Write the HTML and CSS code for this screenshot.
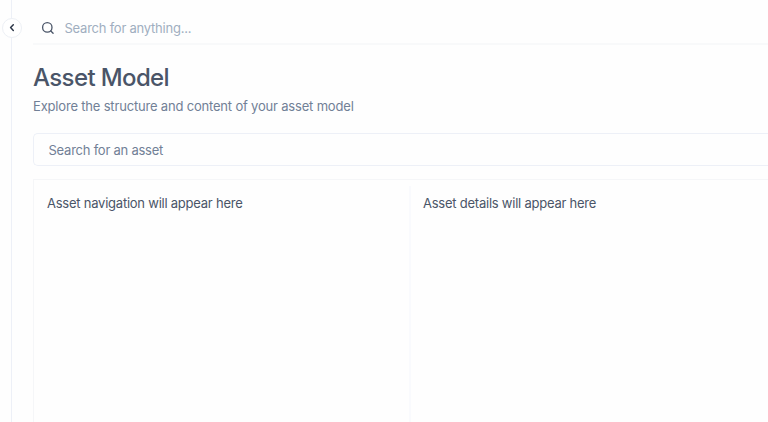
FILE: index.html
```
<!DOCTYPE html>
<html lang="en">
<head>
<meta charset="utf-8">
<title>Asset Model</title>
<link rel="stylesheet" href="styles.css">
</head>
<body>
<div class="app">
  <aside class="rail">
    <button class="toggle" aria-label="Expand sidebar">
      <svg width="18" height="18" viewBox="0 0 18 18" fill="none" stroke="currentColor" stroke-width="1.5" stroke-linecap="round" stroke-linejoin="round"><path d="M10.3 5.8 7.6 8.6l2.7 2.8"/></svg>
    </button>
  </aside>
  <main class="main">
    <header class="topbar">
      <svg class="search-icon" width="14" height="14" viewBox="0 0 14 14" fill="none" stroke="currentColor" stroke-width="1.3" stroke-linecap="round"><circle cx="6.3" cy="6.4" r="4.7"/><path d="m9.8 10 2.3 2.3"/></svg>
      <span class="placeholder">Search for anything...</span>
    </header>
    <h1 class="title">Asset Model</h1>
    <p class="subtitle">Explore the structure and content of your asset model</p>
    <div class="asset-search"><span class="asset-hint">Search for an asset</span></div>
    <section class="panels">
      <div class="panel nav"><span class="nav-text">Asset navigation will appear here</span></div>
      <div class="panel details"><span class="details-text">Asset details will appear here</span></div>
    </section>
  </main>
</div>
</body>
</html>
```
FILE: styles.css
```
* { box-sizing: border-box; }
body {
  margin: 0;
  height: 422px;
  overflow: hidden;
  background: #fefefe;
  color: #4a5568;
  font-family: Inter, "Liberation Sans", sans-serif;
  font-size: 13px;
  letter-spacing: -0.235px;
}
.app { display: flex; height: 422px; }
.rail {
  position: relative;
  flex: 0 0 12px;
  border-right: 1px solid #edf0f7;
}
.toggle {
  position: absolute;
  left: 2px;
  top: 18px;
  width: 20px;
  height: 20px;
  padding: 0;
  display: grid;
  place-items: center;
  border: 1px solid #edf0f5;
  border-radius: 50%;
  background: #fff;
  color: #2d3748;
}
.main {
  flex: 1;
  min-width: 0;
  padding-left: 21px;
  display: flex;
  flex-direction: column;
}
.topbar {
  flex: 0 0 45px;
  display: flex;
  align-items: center;
  padding: 13px 0 0 8px;
  border-bottom: 2px solid #f8f9fa;
}
.search-icon { margin-right: 9.5px; color: #4a5568; }
.placeholder { color: #a0aec0; }
.title {
  margin: 17px 0 0;
  font-size: 24px;
  line-height: 32px;
  font-weight: 500;
  letter-spacing: -0.62px;
}
.subtitle {
  margin: 2px 0 0;
  line-height: 20px;
  letter-spacing: -0.185px;
  color: #718096;
}
.asset-search {
  flex: 0 0 33px;
  margin-top: 17px;
  display: flex;
  align-items: center;
  padding-left: 14.5px;
  border: 1px solid #edf0f7;
  border-right: 0;
  border-radius: 5px 0 0 5px;
  color: #718096;
}
.panels {
  flex: 1;
  margin-top: 13px;
  display: grid;
  grid-template-columns: 375px 1fr;
  border-top: 1px solid #f5f6f8;
  border-left: 1px solid #f5f6f8;
}
.panel { line-height: 20px; }
.nav { padding: 13px 0 0 13px; }
.details {
  margin-top: 6px;
  padding: 7px 0 0 12px;
  border-left: 2px solid #f9fafd;
}
```
